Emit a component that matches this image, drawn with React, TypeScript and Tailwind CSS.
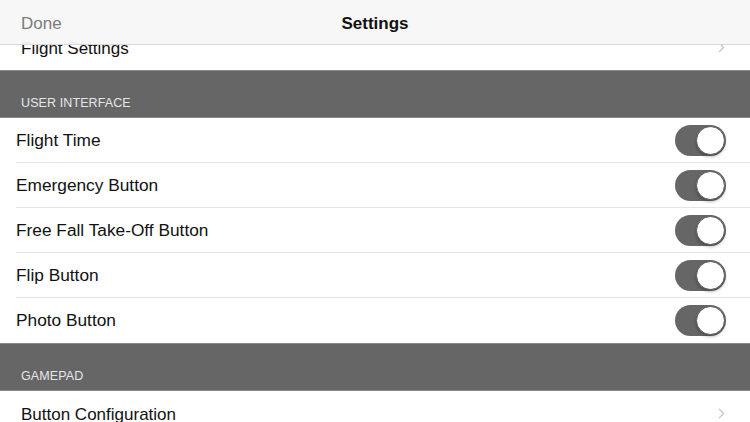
import { useState } from "react";
import { ChevronRight } from "lucide-react";

const font = { fontFamily: '"Liberation Sans", Arial, sans-serif' };

const Toggle = ({ on, onClick }: { on: boolean; onClick: () => void }) => {
  return (
    <button
      onClick={onClick}
      className={`relative flex h-[31px] w-[51px] items-center rounded-full p-[1px] ${on ? "justify-end bg-[#666666]" : "justify-start bg-[#e5e5e5]"}`}
    >
      <span className="h-[29px] w-[29px] rounded-full border border-[#555] bg-white shadow-[0_2px_3px_rgba(0,0,0,0.25)]" />
    </button>
  );
};

const SectionHeader = ({ title }: { title: string }) => (
  <div className="flex h-[48px] items-end border-y border-[#8a8a8a] bg-[#666666] px-[21px] pb-[4px]">
    <span className="text-[12.5px] tracking-[0.1px] text-[#e6e6e6]">{title}</span>
  </div>
);

const LinkRow = ({ label }: { label: string }) => (
  <div className="flex h-[45px] items-center justify-between bg-white pl-[21px] pr-[20px]">
    <span className="pt-[2px] text-[17px] text-[#111]">{label}</span>
    <ChevronRight size={17} strokeWidth={1.75} className="text-[#c8c8cc]" />
  </div>
);

const rows = [
  "Flight Time",
  "Emergency Button",
  "Free Fall Take-Off Button",
  "Flip Button",
  "Photo Button",
];

const App = () => {
  const [toggles, setToggles] = useState<boolean[]>(rows.map(() => true));

  const flip = (i: number) => {
    setToggles((prev) => prev.map((v, j) => (j === i ? !v : v)));
  };

  return (
    <div style={font} className="relative h-[422px] w-[750px] overflow-hidden bg-[#efeff4]">
      <header className="absolute left-0 right-0 top-0 z-10 flex h-[45px] items-center justify-center border-b border-[#d9d9d9] bg-[#f7f7f7]/95 pt-[3px]">
        <button className="absolute left-[21px] text-[17px] text-[#7b7b7b]">Done</button>
        <h1 className="text-[17px] font-bold text-[#111]">Settings</h1>
      </header>

      <div className="flex flex-col pt-[25px]">
        <LinkRow label="Flight Settings" />
        <SectionHeader title="USER INTERFACE" />
        <div className="flex flex-col bg-white">
          {rows.map((label, i) => (
            <div key={label} className="flex h-[45px] items-center pl-[16px]">
              <div
                className={`flex h-full flex-1 items-center justify-between pr-[24px] ${i < rows.length - 1 ? "border-b border-[#e4e4e4]" : ""}`}
              >
                <span className="pt-[1px] text-[17.3px] text-[#111]">{label}</span>
                <Toggle on={toggles[i]} onClick={() => flip(i)} />
              </div>
            </div>
          ))}
        </div>
        <SectionHeader title="GAMEPAD" />
        <LinkRow label="Button Configuration" />
      </div>
    </div>
  );
};

export default App;
